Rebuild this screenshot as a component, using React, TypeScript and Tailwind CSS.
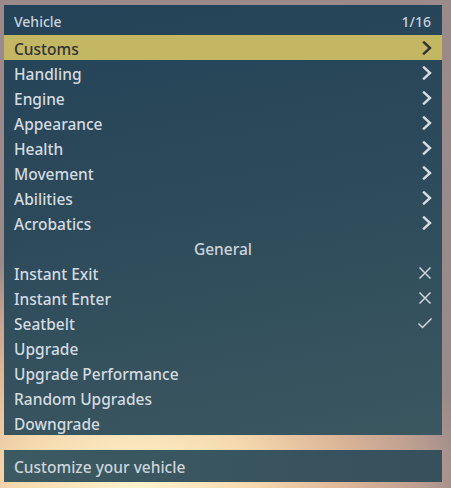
import React from "react";

const Chevron = ({ dark }: { dark?: boolean }) => (
  <svg width="12" height="14" viewBox="0 0 12 14" className="shrink-0 -mt-[3px]">
    <polyline
      points="3,1.5 9,7 3,12.5"
      fill="none"
      stroke={dark ? "#2f3338" : "#d6dde2"}
      strokeWidth="2.4"
      strokeLinecap="square"
    />
  </svg>
);

const Cross = () => (
  <svg width="14" height="14" viewBox="0 0 14 14" className="shrink-0 -mt-[3px] mr-[1px]">
    <path d="M1.5 1.5 L12.5 12.5 M12.5 1.5 L1.5 12.5" stroke="#d0d6db" strokeWidth="1.5" fill="none" />
  </svg>
);

const Check = () => (
  <svg width="16" height="14" viewBox="0 0 16 14" className="shrink-0 -mt-[3px]">
    <path d="M1.5 7.5 L5.5 11.5 L14.5 2.5" stroke="#d0d6db" strokeWidth="1.5" fill="none" />
  </svg>
);

type Item = { label: string; right?: "chev" | "x" | "check"; header?: boolean };

const items: Item[] = [
  { label: "Customs", right: "chev" },
  { label: "Handling", right: "chev" },
  { label: "Engine", right: "chev" },
  { label: "Appearance", right: "chev" },
  { label: "Health", right: "chev" },
  { label: "Movement", right: "chev" },
  { label: "Abilities", right: "chev" },
  { label: "Acrobatics", right: "chev" },
  { label: "General", header: true },
  { label: "Instant Exit", right: "x" },
  { label: "Instant Enter", right: "x" },
  { label: "Seatbelt", right: "check" },
  { label: "Upgrade" },
  { label: "Upgrade Performance" },
  { label: "Random Upgrades" },
  { label: "Downgrade" },
];

export default function App() {
  return (
    <div
      className="w-[451px] h-[488px] overflow-hidden pt-[5px] pl-[4px] pr-[9px] bg-[radial-gradient(ellipse_75%_50%_at_30%_100%,#fff3cc_0%,#f6d9ae_35%,#dcb698_62%,#c0a192_82%,#9a8a89_100%)]"
      style={{ fontFamily: '"Noto Sans", "Open Sans", sans-serif' }}
    >
      <div className="flex flex-col bg-[linear-gradient(170deg,#244358_0%,#2c4a5a_45%,#3b5760_100%)]">
        <div className="h-[30px] flex items-center justify-between pt-[3px] pl-[10px] pr-[11px] text-[14px] font-medium text-[#c9d2d8]">
          <span>Vehicle</span>
          <span>1/16</span>
        </div>
        {items.map((it, i) => {
          const selected = i === 0;
          if (it.header) {
            return (
              <div key={i} className="h-[25px] flex items-center justify-center pt-[4px] text-[15.5px] font-medium text-[#cdd5da]">
                {it.label}
              </div>
            );
          }
          return (
            <div
              key={i}
              className={
                "h-[25px] flex items-center justify-between pt-[4px] pl-[10px] pr-[9px] text-[15.5px] font-medium " +
                (selected ? "bg-[#c4b763] text-[#2f3338]" : "text-[#d4dbe0]")
              }
            >
              <span>{it.label}</span>
              {it.right === "chev" && <Chevron dark={selected} />}
              {it.right === "x" && <Cross />}
              {it.right === "check" && <Check />}
            </div>
          );
        })}
      </div>
      <div className="mt-[15px] h-[32px] flex items-center pl-[10px] pt-[3px] text-[15.5px] font-medium text-[#ccd4d9] bg-[linear-gradient(90deg,#3c5a62_0%,#36505c_100%)]">
        Customize your vehicle
      </div>
    </div>
  );
}
